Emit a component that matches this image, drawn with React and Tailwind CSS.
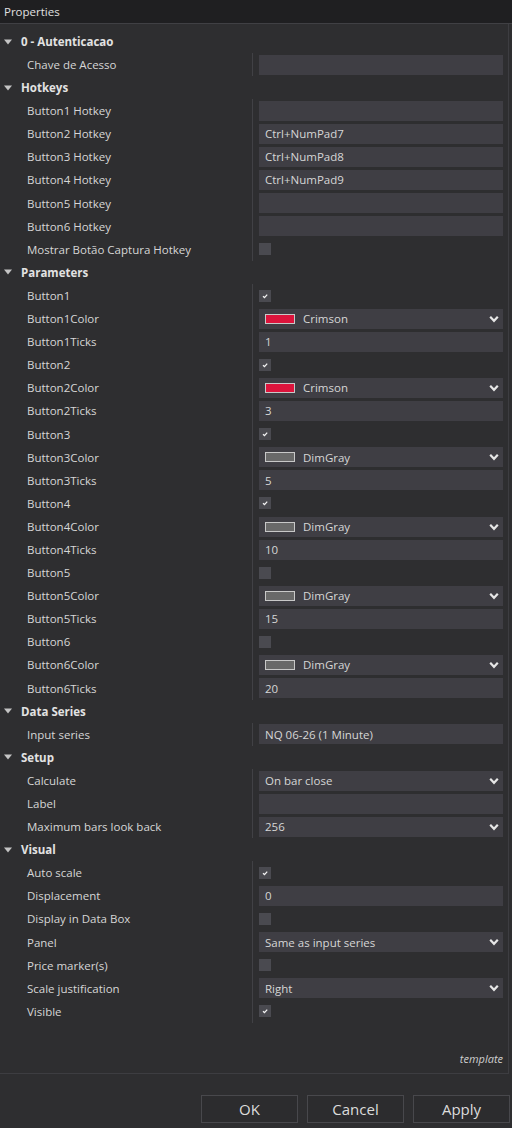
import React from 'react';

const rows = [
  { cat: '0 - Autenticacao' },
  { label: 'Chave de Acesso', type: 'text', value: '' },
  { cat: 'Hotkeys' },
  { label: 'Button1 Hotkey', type: 'text', value: '' },
  { label: 'Button2 Hotkey', type: 'text', value: 'Ctrl+NumPad7' },
  { label: 'Button3 Hotkey', type: 'text', value: 'Ctrl+NumPad8' },
  { label: 'Button4 Hotkey', type: 'text', value: 'Ctrl+NumPad9' },
  { label: 'Button5 Hotkey', type: 'text', value: '' },
  { label: 'Button6 Hotkey', type: 'text', value: '' },
  { label: 'Mostrar Botão Captura Hotkey', type: 'check', value: false },
  { cat: 'Parameters' },
  { label: 'Button1', type: 'check', value: true },
  { label: 'Button1Color', type: 'color', value: 'Crimson', swatch: '#dc143c' },
  { label: 'Button1Ticks', type: 'text', value: '1' },
  { label: 'Button2', type: 'check', value: true },
  { label: 'Button2Color', type: 'color', value: 'Crimson', swatch: '#dc143c' },
  { label: 'Button2Ticks', type: 'text', value: '3' },
  { label: 'Button3', type: 'check', value: true },
  { label: 'Button3Color', type: 'color', value: 'DimGray', swatch: '#696969' },
  { label: 'Button3Ticks', type: 'text', value: '5' },
  { label: 'Button4', type: 'check', value: true },
  { label: 'Button4Color', type: 'color', value: 'DimGray', swatch: '#696969' },
  { label: 'Button4Ticks', type: 'text', value: '10' },
  { label: 'Button5', type: 'check', value: false },
  { label: 'Button5Color', type: 'color', value: 'DimGray', swatch: '#696969' },
  { label: 'Button5Ticks', type: 'text', value: '15' },
  { label: 'Button6', type: 'check', value: false },
  { label: 'Button6Color', type: 'color', value: 'DimGray', swatch: '#696969' },
  { label: 'Button6Ticks', type: 'text', value: '20' },
  { cat: 'Data Series' },
  { label: 'Input series', type: 'text', value: 'NQ 06-26 (1 Minute)' },
  { cat: 'Setup' },
  { label: 'Calculate', type: 'select', value: 'On bar close' },
  { label: 'Label', type: 'text', value: '' },
  { label: 'Maximum bars look back', type: 'select', value: '256' },
  { cat: 'Visual' },
  { label: 'Auto scale', type: 'check', value: true },
  { label: 'Displacement', type: 'text', value: '0' },
  { label: 'Display in Data Box', type: 'check', value: false },
  { label: 'Panel', type: 'select', value: 'Same as input series' },
  { label: 'Price marker(s)', type: 'check', value: false },
  { label: 'Scale justification', type: 'select', value: 'Right' },
  { label: 'Visible', type: 'check', value: true },
];

function Chevron() {
  return (
    <svg width="10" height="8" viewBox="0 0 10 8" className="ml-auto mr-[4px]">
      <path d="M1.2 1.8 L5 5.8 L8.8 1.8" fill="none" stroke="#e6e6e6" strokeWidth="2.2" />
    </svg>
  );
}

function Value({ row }) {
  if (row.type === 'check') {
    return (
      <div className="w-[12px] h-[12px] bg-[#4a4a50] flex items-center justify-center">
        {row.value && (
          <svg width="8" height="8" viewBox="0 0 8 8">
            <path d="M2 4.2 L3.5 5.6 L6.2 2.6" fill="none" stroke="#f2f2f2" strokeWidth="1.3" />
          </svg>
        )}
      </div>
    );
  }
  if (row.type === 'color') {
    return (
      <div className="h-[20px] w-full bg-[#3f3e44] flex items-center pl-[6px]">
        <span className="w-[30px] h-[10px] border border-[#c8c8c8]" style={{ backgroundColor: row.swatch }} />
        <span className="ml-[8px]">{row.value}</span>
        <Chevron />
      </div>
    );
  }
  return (
    <div className="h-[20px] w-full bg-[#3f3e44] flex items-center pl-[6px]">
      <span>{row.value}</span>
      {row.type === 'select' && <Chevron />}
    </div>
  );
}

export default function App() {
  return (
    <div className="w-[512px] h-[1128px] bg-[#2e2e30] text-[#d6d6d6] text-[11.5px] flex flex-col overflow-hidden" style={{ fontFamily: '"Open Sans", "Noto Sans", sans-serif' }}>
      <div className="h-[24px] shrink-0 bg-[#1f1f21] border-b border-[#404044] flex items-center px-[4px] text-[#e0e0e0]">
        Properties
      </div>

      <div className="h-[1050px] shrink-0 flex flex-col border-r border-[#3d3d41] border-b mr-[3px] pt-[6px]">
        {rows.map((r, i) =>
          r.cat ? (
            <div key={i} className="h-[23.1px] flex items-center font-bold text-[#e2e2e2]">
              <svg width="10" height="8" viewBox="0 0 10 8" className="ml-[3px] mr-[8px]">
                <path d="M1 1.5 L9 1.5 L5 6.5 Z" fill="#c4c4c4" />
              </svg>
              {r.cat}
            </div>
          ) : (
            <div key={i} className="h-[23.1px] flex items-stretch">
              <div className="w-[252px] shrink-0 pl-[27px] flex items-center">{r.label}</div>
              <div className="flex-1 border-l border-[#414145] pl-[6px] pr-[5px] flex items-center">
                <Value row={r} />
              </div>
            </div>
          )
        )}
        <div className="flex-1 flex items-end justify-end pr-[5px] pb-[6px]">
          <span className="italic text-[11px] text-[#cfcfcf]">template</span>
        </div>
      </div>

      <div className="flex-1 flex justify-end items-start pt-[21px] pr-[2px] gap-[9px]">
        {['OK', 'Cancel', 'Apply'].map((b) => (
          <button key={b} className="w-[97px] h-[28px] border border-[#48484c] bg-[#2c2c2e] text-[15px] text-[#dcdcdc] flex items-center justify-center">
            {b}
          </button>
        ))}
      </div>
    </div>
  );
}
